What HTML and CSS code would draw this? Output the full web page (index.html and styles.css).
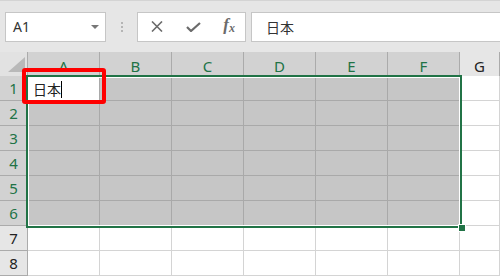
FILE: index.html
```html
<!DOCTYPE html>
<html lang="ja">

<head>
  <meta charset="UTF-8">
  <meta name="viewport" content="width=device-width, initial-scale=1.0">
  <title>Excel</title>
  <link rel="stylesheet" href="styles.css">
</head>

<body>
  <div class="toolbar">
    <div class="namebox">
      <span>A1</span>
      <span class="drop"></span>
    </div>
    <div class="grip"><i></i><i></i><i></i></div>
    <div class="fbuttons">
      <svg width="12" height="11" viewBox="0 0 12 11"><path d="M1 0.5 L11 10.5 M11 0.5 L1 10.5" stroke="#6b6b6b" stroke-width="1.6" fill="none"/></svg>
      <svg width="15" height="10" viewBox="0 0 15 10"><path d="M1 5 L5 9 L14 1" stroke="#6b6b6b" stroke-width="2.2" fill="none"/></svg>
      <span class="fx">f<sub>x</sub></span>
    </div>
    <div class="formula">日本</div>
  </div>

  <div class="sheet">
    <div class="row head">
      <div class="corner"><svg width="28" height="23" viewBox="0 0 28 23"><path d="M8 20 L25 5 L25 20 Z" fill="#b9b9b9"/></svg></div>
      <div class="ch on">A</div>
      <div class="ch on">B</div>
      <div class="ch on">C</div>
      <div class="ch on">D</div>
      <div class="ch on">E</div>
      <div class="ch on">F</div>
      <div class="ch">G</div>
    </div>

    <div class="row sel">
      <div class="rh on">1</div>
      <div class="cell active">日本<span class="cursor"></span></div>
      <div class="cell"></div><div class="cell"></div><div class="cell"></div><div class="cell"></div><div class="cell"></div>
      <div class="cell"></div>
    </div>
    <div class="row sel">
      <div class="rh on">2</div>
      <div class="cell"></div><div class="cell"></div><div class="cell"></div><div class="cell"></div><div class="cell"></div><div class="cell"></div>
      <div class="cell"></div>
    </div>
    <div class="row sel">
      <div class="rh on">3</div>
      <div class="cell"></div><div class="cell"></div><div class="cell"></div><div class="cell"></div><div class="cell"></div><div class="cell"></div>
      <div class="cell"></div>
    </div>
    <div class="row sel">
      <div class="rh on">4</div>
      <div class="cell"></div><div class="cell"></div><div class="cell"></div><div class="cell"></div><div class="cell"></div><div class="cell"></div>
      <div class="cell"></div>
    </div>
    <div class="row sel">
      <div class="rh on">5</div>
      <div class="cell"></div><div class="cell"></div><div class="cell"></div><div class="cell"></div><div class="cell"></div><div class="cell"></div>
      <div class="cell"></div>
    </div>
    <div class="row sel">
      <div class="rh on">6</div>
      <div class="cell"></div><div class="cell"></div><div class="cell"></div><div class="cell"></div><div class="cell"></div><div class="cell"></div>
      <div class="cell"></div>
    </div>
    <div class="row">
      <div class="rh">7</div>
      <div class="cell"></div><div class="cell"></div><div class="cell"></div><div class="cell"></div><div class="cell"></div><div class="cell"></div>
      <div class="cell"></div>
    </div>
    <div class="row">
      <div class="rh">8</div>
      <div class="cell"></div><div class="cell"></div><div class="cell"></div><div class="cell"></div><div class="cell"></div><div class="cell"></div>
      <div class="cell"></div>
    </div>

    <!-- selection range A1:F6 -->
    <div class="selection"><div class="handle"></div></div>
    <!-- red highlight around A1 -->
    <div class="mark"></div>
  </div>
</body>

</html>
```

FILE: styles.css
```css
body {
  margin: 0;
  font-family: "Noto Sans", "Noto Sans CJK JP", sans-serif;
  background-color: #fff;
  overflow: hidden;
}

.toolbar {
  display: flex;
  align-items: center;
  height: 52px;
  padding: 0 0 0 5px;
  box-sizing: border-box;
  background-color: #e6e6e6;
  border-top: 1px solid #d4d4d4;
}

.namebox,
.fbuttons,
.formula {
  height: 30px;
  box-sizing: border-box;
  background-color: #fff;
  border: 1px solid #c6c6c6;
}

.namebox {
  width: 101px;
  display: flex;
  align-items: center;
  justify-content: space-between;
  padding: 0 6px 0 7px;
  font-size: 14px;
  color: #333;
}

.drop {
  width: 0;
  height: 0;
  border-left: 4px solid transparent;
  border-right: 4px solid transparent;
  border-top: 4px solid #777;
}

.grip {
  width: 31px;
  display: flex;
  flex-direction: column;
  align-items: center;
  gap: 2px;
}

.grip i {
  display: block;
  width: 2px;
  height: 2px;
  background-color: #b5b5b5;
}

.fbuttons {
  width: 109px;
  display: flex;
  align-items: center;
  padding: 0 10px 0 13px;
  justify-content: space-between;
}

.fx {
  font-family: "Liberation Serif", serif;
  font-style: italic;
  font-weight: bold;
  font-size: 17px;
  color: #6b6b6b;
  line-height: 1;
  margin-top: -3px;
}

.fx sub {
  font-size: 12px;
  vertical-align: -2px;
}

.formula {
  flex: 1;
  margin-left: 5px;
  margin-right: -2px;
  padding-left: 14px;
  display: flex;
  align-items: center;
  font-size: 14px;
  color: #333;
}

/* grid */
.sheet {
  position: relative;
}

.row {
  display: grid;
  grid-template-columns: 28px repeat(6, 72px) 1fr;
  height: 25px;
}

.row.head {
  height: 24px;
}

.row > div {
  box-sizing: border-box;
  border-right: 1px solid #d4d4d4;
  border-bottom: 1px solid #d4d4d4;
}

.corner {
  background-color: #e2e2e2;
  border-color: #ababab !important;
}

.ch,
.rh {
  display: flex;
  align-items: center;
  justify-content: center;
  background-color: #e6e6e6;
  border-color: #ababab !important;
  font-size: 15px;
  color: #222;
}

.ch.on,
.rh.on {
  background-color: #d2d2d2;
  color: #217346;
}

.row.sel .cell {
  background-color: #c6c6c6;
  border-color: #a9a9a9;
}

.row.sel .cell:last-child {
  background-color: #fff;
  border-color: #d4d4d4;
}

.row.sel .cell.active {
  background-color: #fff;
  display: flex;
  align-items: center;
  padding: 2px 0 0 5px;
  font-size: 14px;
  color: #222;
}

.cursor {
  display: block;
  width: 1px;
  height: 17px;
  background-color: #000;
}

.selection {
  position: absolute;
  left: 26px;
  top: 23px;
  width: 436px;
  height: 153px;
  box-sizing: border-box;
  border: 2px solid #217346;
  box-shadow: inset 0 0 0 1px #fff;
}

.handle {
  position: absolute;
  right: -6px;
  bottom: -6px;
  width: 6px;
  height: 6px;
  background-color: #217346;
  border: 1px solid #fff;
}

.mark {
  position: absolute;
  left: 22px;
  top: 16px;
  width: 84px;
  height: 36px;
  box-sizing: border-box;
  border: 4px solid #f00;
  border-radius: 3px;
}
```
